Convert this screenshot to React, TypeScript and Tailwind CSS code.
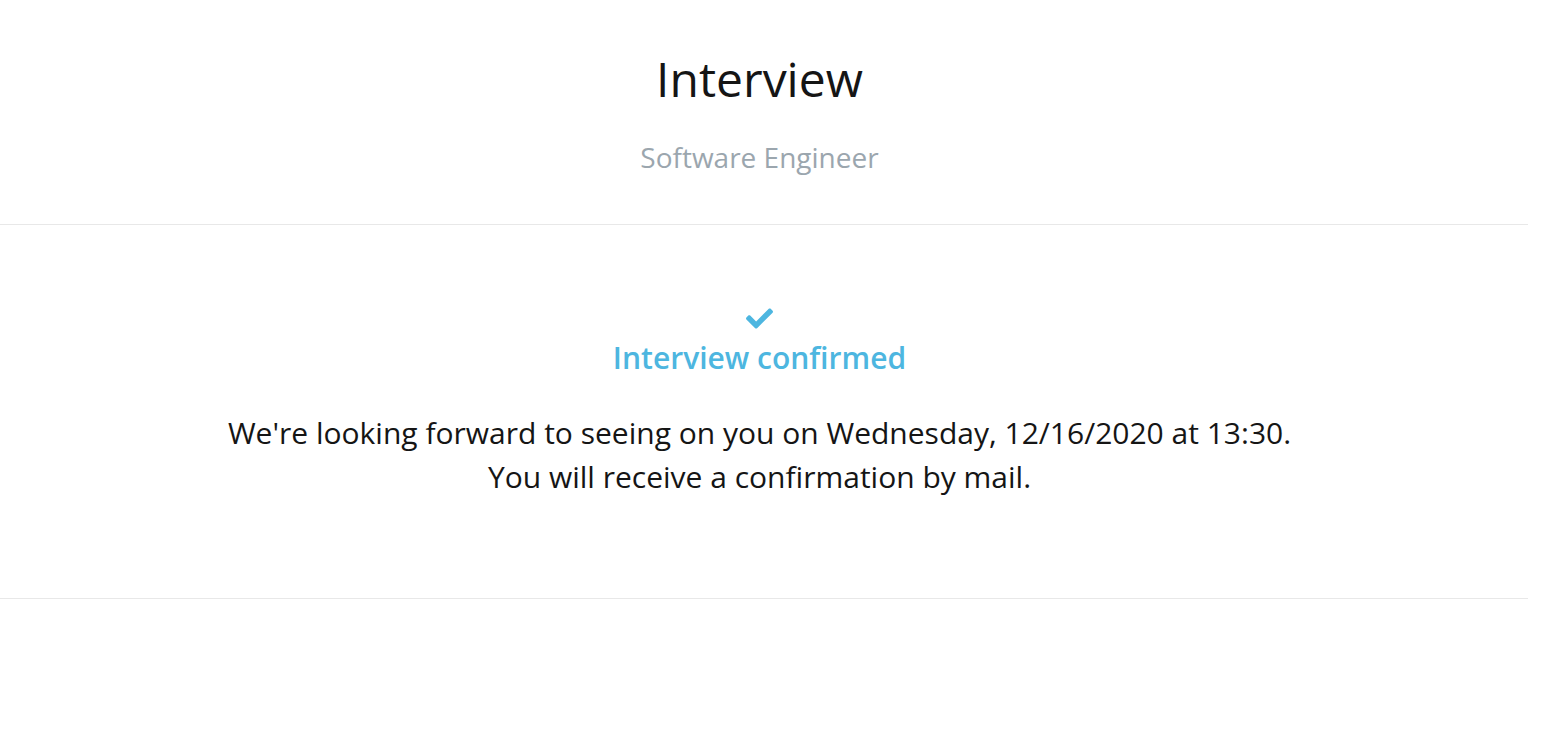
import React from "react";
import { FaCheck } from "react-icons/fa";

export default function App() {
  return (
    <div className="w-[1528px] bg-white text-[#151515]" style={{ fontFamily: '"Open Sans", sans-serif' }}>
      <div className="flex flex-col items-center pr-[9px] pt-[46px] h-[225px] border-b border-[#e8e8e8]">
        <h1 className="text-[48px] leading-[66px] font-normal text-[#151515]">Interview</h1>
        <div className="mt-[26px] text-[28px] leading-[38px] text-[#9ba6ae]">Software Engineer</div>
      </div>
      <div className="flex flex-col items-center pr-[9px] h-[374px] border-b border-[#e8e8e8] pt-[80px]">
        <FaCheck className="text-[#4db6e0] w-[27px] h-[27px]" />
        <div className="mt-[6px] text-[30px] leading-[40px] font-semibold text-[#4db6e0]">Interview confirmed</div>
        <p className="mt-[33px] text-[30px] leading-[44px] text-center text-[#151515]">
          We're looking forward to seeing on you on Wednesday, 12/16/2020 at 13:30.
          <br />
          You will receive a confirmation by mail.
        </p>
      </div>
    </div>
  );
}
